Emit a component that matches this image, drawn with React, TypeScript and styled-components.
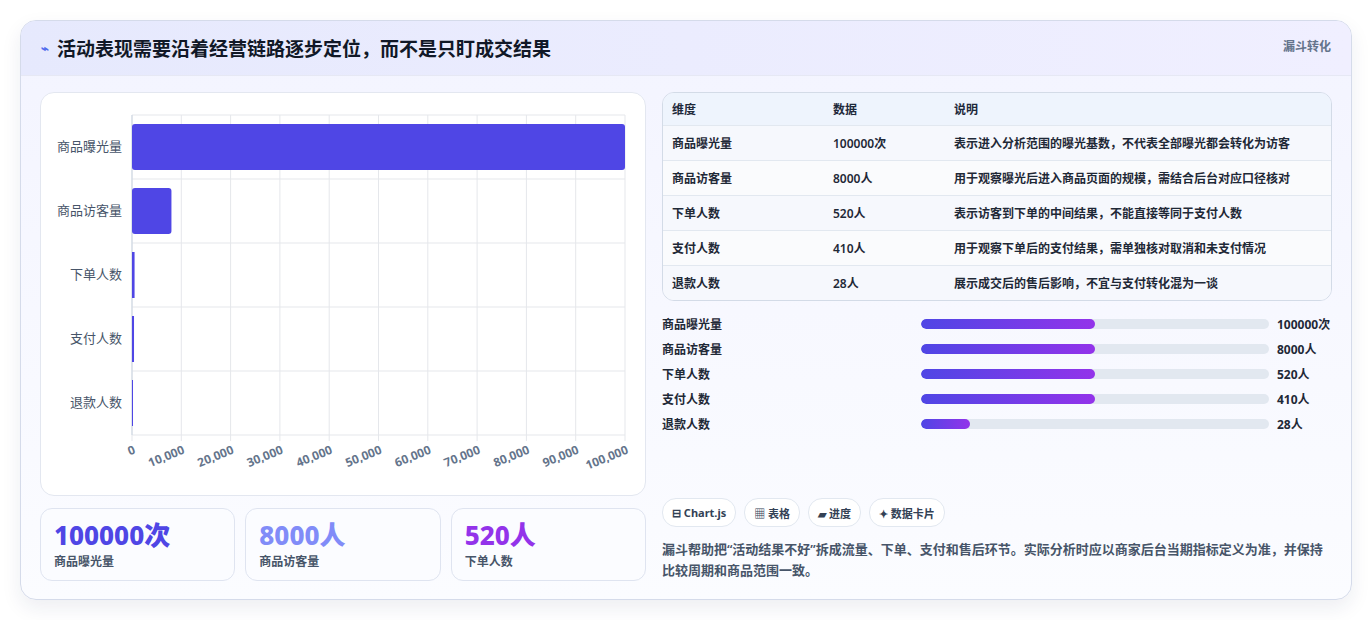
import React from 'react'
import styled, { createGlobalStyle } from 'styled-components'

const Global = createGlobalStyle`
  body { margin: 0; background: #fff; font-family: "Noto Sans", "Noto Sans CJK SC", sans-serif; }
`

const Page = styled.div`
  padding: 20px;
  height: 620px;
  box-sizing: border-box;
`
const Card = styled.div`
  height: 580px;
  box-sizing: border-box;
  border: 1px solid #d5dbea;
  border-radius: 16px;
  overflow: hidden;
  background: linear-gradient(180deg, #f3f4ff 0%, #fbfcff 100%);
  box-shadow: 0 8px 20px rgba(30, 40, 90, 0.08);
  display: flex;
  flex-direction: column;
`
const Header = styled.div`
  height: 55px;
  display: flex;
  align-items: center;
  justify-content: space-between;
  padding: 0 20px;
  background: linear-gradient(90deg, #e6e9fd, #f0efff);
  border-bottom: 1px solid #e6e8f4;
`
const Title = styled.h1`
  margin: 0;
  font-size: 19px;
  font-weight: 700;
  color: #111827;
  display: flex;
  align-items: center;
  gap: 8px;
`
const Tag = styled.span`
  align-self: flex-start;
  margin-top: 16px;
  font-size: 12px;
  font-weight: 700;
  color: #64748b;
`
const Body = styled.div`
  flex: 1;
  display: grid;
  grid-template-columns: 606px 670px;
  gap: 16px;
  padding: 16px 19px 18px 19px;
`
const Col = styled.div`
  display: flex;
  flex-direction: column;
  gap: 12px;
`
const ChartBox = styled.div`
  height: 404px;
  box-sizing: border-box;
  background: #fff;
  border: 1px solid #e3e7f0;
  border-radius: 14px;
`
const Stats = styled.div`
  display: grid;
  grid-template-columns: repeat(3, 1fr);
  gap: 10px;
`
const Stat = styled.div`
  height: 73px;
  box-sizing: border-box;
  border: 1px solid #dfe4f0;
  border-radius: 12px;
  background: #fbfcff;
  padding: 9px 13px;
`
const StatValue = styled.div<{ $c: string }>`
  font-size: 26px;
  font-weight: 800;
  line-height: 34px;
  color: ${p => p.$c};
`
const StatLabel = styled.div`
  font-size: 12px;
  font-weight: 600;
  color: #475569;
`
const Table = styled.table`
  width: 100%;
  border-collapse: separate;
  border-spacing: 0;
  border: 1px solid #d3dbe7;
  border-radius: 12px;
  overflow: hidden;
  font-size: 12px;
  color: #1f2937;
  th { background: #eef4fd; text-align: left; font-weight: 700; height: 32px; padding: 0 9px; color: #1e293b; }
  td { height: 34px; padding: 0 9px; border-top: 1px solid #e2e8f0; font-weight: 600; }
  tr:nth-child(odd) td { background: #f6f8fd; }
  tr:nth-child(even) td { background: #fafbfd; }
`
const Bars = styled.div`
  display: flex;
  flex-direction: column;
  gap: 7px;
  margin-top: 2px;
`
const BarRow = styled.div`
  display: grid;
  grid-template-columns: 251px 348px auto;
  gap: 8px;
  align-items: center;
  font-size: 12px;
  font-weight: 600;
  height: 18px;
  color: #1f2937;
`
const Track = styled.div`
  height: 10px;
  border-radius: 5px;
  background: #e2e8f0;
  overflow: hidden;
`
const Fill = styled.div`
  height: 100%;
  border-radius: 5px;
  background: linear-gradient(90deg, #4f46e5, #9333ea);
`
const Val = styled.span`
  font-weight: 700;
`
const Chips = styled.div`
  margin-top: auto;
  display: flex;
  gap: 8px;
`
const Chip = styled.span`
  font-size: 11px;
  font-weight: 700;
  color: #334155;
  border: 1px solid #e2e8f0;
  background: #fff;
  border-radius: 14px;
  padding: 0 9px;
  height: 27px;
  display: flex;
  align-items: center;
  gap: 3px;
`
const Note = styled.p`
  margin: 0;
  font-size: 13px;
  font-weight: 600;
  line-height: 21px;
  color: #475569;
`

const cats = ['商品曝光量', '商品访客量', '下单人数', '支付人数', '退款人数']
const vals = [100000, 8000, 520, 410, 28]
const units = ['次', '人', '人', '人', '人']

function Chart() {
  const x0 = 91, x1 = 584, y0 = 22, rowH = 64
  return (
    <svg width="604" height="402" style={{ display: 'block' }}>
      {Array.from({ length: 11 }, (_, i) => {
        const x = x0 + (i * (x1 - x0)) / 10
        return <line key={i} x1={x} x2={x} y1={y0} y2={y0 + rowH * 5 + 6} stroke="#e5e7eb" />
      })}
      {Array.from({ length: 6 }, (_, i) => (
        <line key={i} x1={x0} x2={x1} y1={y0 + i * rowH} y2={y0 + i * rowH} stroke="#e5e7eb" />
      ))}
      <line x1={x0} x2={x0} y1={y0} y2={y0 + rowH * 5} stroke="#cbd5e1" />
      {cats.map((c, i) => {
        const w = Math.max(1, (vals[i] / 100000) * (x1 - x0))
        const cy = y0 + i * rowH + rowH / 2
        return (
          <g key={c}>
            <text x={x0 - 10} y={cy + 4} textAnchor="end" fontSize="13" fill="#475569" fontFamily="Noto Sans CJK SC, sans-serif">{c}</text>
            <rect x={x0} y={cy - 23} width={w} height={46} rx={w > 4 ? 3 : 0} fill="#4f46e5" />
          </g>
        )
      })}
      {Array.from({ length: 11 }, (_, i) => {
        const x = x0 + (i * (x1 - x0)) / 10
        const label = (i * 10000).toLocaleString('en-US')
        return (
          <text key={i} x={x + 4} y={y0 + rowH * 5 + 18} textAnchor="end" fontSize="12" fontWeight="700" fill="#64748b"
            transform={`rotate(-22 ${x + 4} ${y0 + rowH * 5 + 18})`}>{label}</text>
        )
      })}
    </svg>
  )
}

const rows = [
  ['商品曝光量', '100000次', '表示进入分析范围的曝光基数，不代表全部曝光都会转化为访客'],
  ['商品访客量', '8000人', '用于观察曝光后进入商品页面的规模，需结合后台对应口径核对'],
  ['下单人数', '520人', '表示访客到下单的中间结果，不能直接等同于支付人数'],
  ['支付人数', '410人', '用于观察下单后的支付结果，需单独核对取消和未支付情况'],
  ['退款人数', '28人', '展示成交后的售后影响，不宜与支付转化混为一谈'],
]
const pct = [50, 50, 50, 50, 14]

export default function App() {
  return (
    <Page>
      <Global />
      <Card>
        <Header>
          <Title><span style={{ color: '#4f6bed', fontSize: 13 }}>⌁</span>活动表现需要沿着经营链路逐步定位，而不是只盯成交结果</Title>
          <Tag>漏斗转化</Tag>
        </Header>
        <Body>
          <Col>
            <ChartBox><Chart /></ChartBox>
            <Stats>
              <Stat><StatValue $c="#4f46e5">100000次</StatValue><StatLabel>商品曝光量</StatLabel></Stat>
              <Stat><StatValue $c="#818cf8">8000人</StatValue><StatLabel>商品访客量</StatLabel></Stat>
              <Stat><StatValue $c="#9333ea">520人</StatValue><StatLabel>下单人数</StatLabel></Stat>
            </Stats>
          </Col>
          <Col>
            <Table>
              <thead><tr><th style={{ width: 143 }}>维度</th><th style={{ width: 103 }}>数据</th><th>说明</th></tr></thead>
              <tbody>
                {rows.map(r => <tr key={r[0]}>{r.map((c, j) => <td key={j}>{c}</td>)}</tr>)}
              </tbody>
            </Table>
            <Bars>
              {cats.map((c, i) => (
                <BarRow key={c}>
                  <span>{c}</span>
                  <Track><Fill style={{ width: `${pct[i]}%` }} /></Track>
                  <Val>{vals[i]}{units[i]}</Val>
                </BarRow>
              ))}
            </Bars>
            <Chips>
              <Chip>⊟ Chart.js</Chip>
              <Chip>▦ 表格</Chip>
              <Chip>▰ 进度</Chip>
              <Chip>✦ 数据卡片</Chip>
            </Chips>
            <Note>漏斗帮助把“活动结果不好”拆成流量、下单、支付和售后环节。实际分析时应以商家后台当期指标定义为准，并保持比较周期和商品范围一致。</Note>
          </Col>
        </Body>
      </Card>
    </Page>
  )
}
